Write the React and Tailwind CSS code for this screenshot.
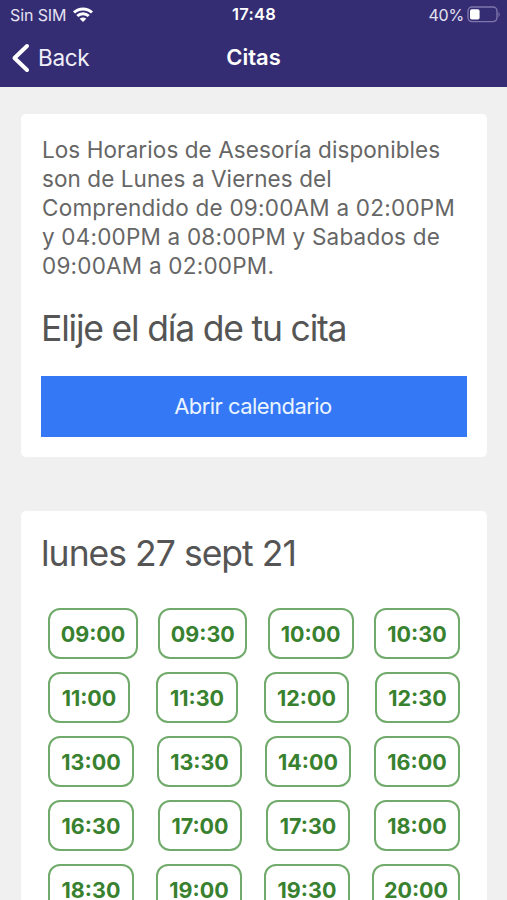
import React from 'react';

// Each slot is [label, tailwind width]
const SLOT_ROWS = [
  [['09:00', 'w-[90px]'], ['09:30', 'w-[89px]'], ['10:00', 'w-[86px]'], ['10:30', 'w-[86px]']],
  [['11:00', 'w-[82px]'], ['11:30', 'w-[82px]'], ['12:00', 'w-[85px]'], ['12:30', 'w-[85px]']],
  [['13:00', 'w-[86px]'], ['13:30', 'w-[85px]'], ['14:00', 'w-[86px]'], ['16:00', 'w-[86px]']],
  [['16:30', 'w-[86px]'], ['17:00', 'w-[84px]'], ['17:30', 'w-[84px]'], ['18:00', 'w-[86px]']],
  [['18:30', 'w-[86px]'], ['19:00', 'w-[86px]'], ['19:30', 'w-[86px]'], ['20:00', 'w-[88px]']],
];

const NOTICE = [
  ['Los Horarios de Asesoría disponibles', 'tracking-[0.08px]'],
  ['son de Lunes a Viernes del', 'tracking-[0.08px]'],
  ['Comprendido de 09:00AM a 02:00PM', 'tracking-[0.23px]'],
  ['y 04:00PM a 08:00PM y Sabados de', 'tracking-[0.2px]'],
  ['09:00AM a 02:00PM.', 'tracking-[0.22px]'],
];

function WifiIcon() {
  return (
    <svg width="20" height="15" viewBox="0 0 20 15" fill="none" stroke="#fff" strokeWidth="3">
      <path d="M1 5.500C6 .7 14 .7 19 5.500" />
      <path d="M4.300 9c3.200-3.100 8.200-3.100 11.400 0" />
      <path d="M10 15 6.700 11.700c1.800-1.700 4.800-1.700 6.600 0z" fill="#fff" stroke="none" />
    </svg>
  );
}

function BatteryIcon() {
  return (
    <svg width="34" height="17" viewBox="0 0 34 17" fill="none">
      <rect x="1" y="1" width="29" height="14.600" rx="4" stroke="#7d76ab" strokeWidth="1.400" />
      <rect x="3" y="3.200" width="9.600" height="10.400" rx="1.800" fill="#fff" />
      <path d="M31.500 6v5c1.600-.8 1.600-4.200 0-5z" fill="#7d76ab" />
    </svg>
  );
}

function Header() {
  return (
    <header className="h-[87px] bg-[#352d74] text-white">
      <div className="grid h-[29px] grid-cols-3 items-center pl-[10px] pr-[6px] text-[16px]">
        <div className="flex items-center gap-[7px]">
          <span className="whitespace-nowrap tracking-[-0.1px] text-[#e4e2f1]">Sin SIM</span>
          <WifiIcon />
        </div>
        <span className="pr-[3px] text-center text-[16.500px] font-semibold tracking-[0.25px]">17:48</span>
        <div className="flex items-center justify-end gap-[3px]">
          <span className="tracking-[-0.2px] text-[#e4e2f1]">40%</span>
          <BatteryIcon />
        </div>
      </div>
      <div className="grid h-[57px] grid-cols-3 items-center pl-[11px] pr-[11px]">
        <button className="flex items-center gap-[7px] text-left">
          <svg width="20" height="30" viewBox="0 0 20 30" fill="none" stroke="#fff" strokeWidth="4" strokeLinejoin="round" strokeLinecap="round">
            <path d="M16 3 3.500 15 16 27" />
          </svg>
          <span className="text-[22.500px] tracking-[-0.3px] text-[#f0eff8]">Back</span>
        </button>
        <h1 className="text-center text-[22px] font-semibold">Citas</h1>
      </div>
    </header>
  );
}

export default function App() {
  return (
    <div className="h-[900px] w-[507px] overflow-hidden bg-[#f0f0f0] font-['Inter',sans-serif] text-[#555]">
      <Header />

      <main className="pl-[21px] pr-[20px] pt-[27px]">
        <section className="h-[343px] rounded-[5px] bg-white px-[20px] pt-[21px]">
          <p className="pl-px text-[22.500px] leading-[29px] text-[#666]">
            {NOTICE.map(([line, tracking]) => (
              <span key={line} className={`block whitespace-nowrap ${tracking}`}>{line}</span>
            ))}
          </p>
          <h2 className="mt-[26px] text-[35.500px] leading-[46px] tracking-[-1.200px]">Elije el día de tu cita</h2>
          <button className="mt-[24px] h-[61px] w-full bg-[#3478f6] pr-[2px] text-[22px] tracking-[-0.550px] text-[#eaf4ff]">
            Abrir calendario
          </button>
        </section>

        {/* Available hours */}
        <section className="mt-[54px] h-[420px] rounded-t-[5px] bg-white px-[20px] pt-[20px]">
          <h2 className="text-[35.500px] leading-[46px] tracking-[-0.980px]">lunes 27 sept 21</h2>
          <div className="mt-[31px] flex flex-col gap-[13px] pl-[7px] pr-[7px]">
            {SLOT_ROWS.map(row => (
              <div key={row[0][0]} className="flex justify-between">
                {row.map(([label, width]) => (
                  <button
                    key={label}
                    className={`h-[51px] shrink-0 rounded-[12px] border-2 border-[#70ab6c] pt-px text-[21.500px] font-bold text-[#38812f] ${width}`}
                  >
                    {label}
                  </button>
                ))}
              </div>
            ))}
          </div>
        </section>
      </main>
    </div>
  );
}
